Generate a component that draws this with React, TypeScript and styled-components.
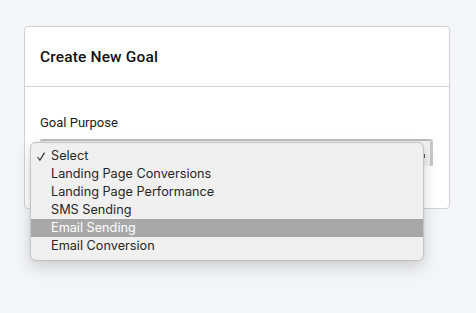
import React, { useState } from "react";
import styled, { createGlobalStyle } from "styled-components";

const GlobalStyle = createGlobalStyle`
    html, body {
        margin: 0;
        padding: 0;
        background-color: #f3f6f9;
        font-family: Roboto, "Liberation Sans", Arial, sans-serif;
    }
`

const Page = styled.div`
    width: 476px;
    height: 313px;
    padding: 26px 0 0 24px;
    box-sizing: border-box;
`

const Card = styled.div`
    width: 426px;
    height: 183px;
    box-sizing: border-box;
    background-color: #ffffff;
    border: 1px solid #cfd2d6;
    border-radius: 4px;
    display: flex;
    flex-direction: column;
`

const CardHeader = styled.div`
    height: 60px;
    box-sizing: border-box;
    padding: 0 15px;
    display: flex;
    align-items: center;
    border-bottom: 1px solid #cfd2d6;
`

const Title = styled.h3`
    margin: 0;
    font-size: 15.5px;
    font-weight: 500;
    color: #111111;
    letter-spacing: 0.15px;
`

const CardBody = styled.div`
    padding: 28px 15px 0 15px;
    display: flex;
    flex-direction: column;
`

const Label = styled.label`
    font-size: 13px;
    color: #1a1a1a;
    margin-bottom: 9px;
`

const SelectWrap = styled.div`
    position: relative;
    width: 393px;
`

const SelectBox = styled.div`
    height: 27px;
    box-sizing: border-box;
    background-color: #f2f2f2;
    border-top: 2px solid #bdbdbd;
    border-right: 3px solid #c8c8c8;
    border-left: 1px solid #d0d0d0;
    border-radius: 2px 3px 0 0;
    display: flex;
    align-items: center;
    justify-content: flex-end;
    padding-right: 5px;
`

const Caret = styled.span`
    width: 2px;
    height: 4px;
    background-color: #555;
    margin-top: 4px;
`

const Menu = styled.ul`
    position: absolute;
    top: 3px;
    left: -10px;
    width: 394px;
    margin: 0;
    padding: 4px 0 5px 0;
    list-style: none;
    box-sizing: border-box;
    background-color: #f0f0f0;
    border: 1px solid #c4c4c4;
    border-radius: 6px;
    box-shadow: 0 6px 16px rgba(0, 0, 0, 0.16), 0 0 2px rgba(0, 0, 0, 0.1);
    font-family: Inter, "Liberation Sans", Arial, sans-serif;
`

const Option = styled.li<{ $active?: boolean }>`
    position: relative;
    height: 18px;
    line-height: 18px;
    padding-left: 20px;
    font-size: 12.7px;
    color: ${(p) => (p.$active ? "#ffffff" : "#262626")};
    background-color: ${(p) => (p.$active ? "#a8a8a8" : "transparent")};
    white-space: nowrap;
`

const Check = styled.svg`
    position: absolute;
    left: 6px;
    top: 5px;
`

const options = [
    "Select",
    "Landing Page Conversions",
    "Landing Page Performance",
    "SMS Sending",
    "Email Sending",
    "Email Conversion",
];

function App() {
    const [selected] = useState<string>("Select");
    const [hover, setHover] = useState<string>("Email Sending");

    return (
        <Page>
            <GlobalStyle />
            <Card>
                <CardHeader>
                    <Title>Create New Goal</Title>
                </CardHeader>
                <CardBody>
                    <Label>Goal Purpose</Label>
                    <SelectWrap>
                        <SelectBox>
                            <Caret />
                        </SelectBox>
                        <Menu>
                            {options.map((o) => (
                                <Option
                                    key={o}
                                    $active={hover === o}
                                    onMouseEnter={() => setHover(o)}
                                >
                                    {selected === o && (
                                        <Check width="8" height="9" viewBox="0 0 8 9">
                                            <path
                                                d="M0.6 5 L2.9 8.2 L7.5 0.6"
                                                fill="none"
                                                stroke="#262626"
                                                strokeWidth="1.1"
                                            />
                                        </Check>
                                    )}
                                    {o}
                                </Option>
                            ))}
                        </Menu>
                    </SelectWrap>
                </CardBody>
            </Card>
        </Page>
    );
}

export default App;
